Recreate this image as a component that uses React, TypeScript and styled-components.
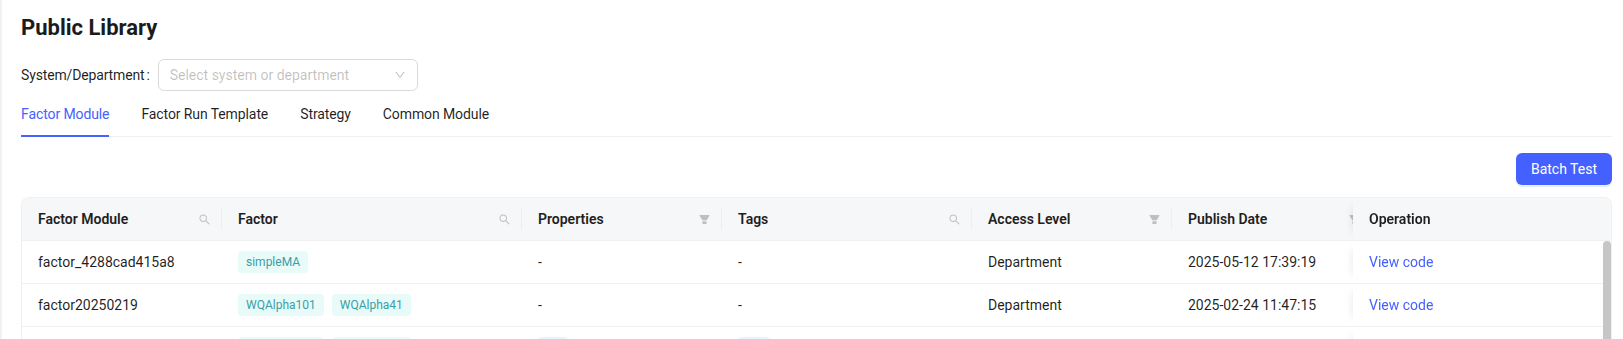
import styled, { createGlobalStyle } from "styled-components";
import { AiOutlineSearch, AiFillFilter, AiOutlineDown } from "react-icons/ai";

const PRIMARY = "#4461ff";

const GlobalStyle = createGlobalStyle`
  html, body {
    margin: 0;
    padding: 0;
    background: #fff;
    overflow: hidden;
  }
  body {
    font-family: Roboto, "Noto Sans", Arial, sans-serif;
    font-size: 14px;
    color: rgba(0, 0, 0, 0.88);
  }
`;

type Filter = "search" | "filter" | null;

const columns: { title: string; width: number; filter: Filter }[] = [
  { title: "Factor Module", width: 200, filter: "search" },
  { title: "Factor", width: 300, filter: "search" },
  { title: "Properties", width: 200, filter: "filter" },
  { title: "Tags", width: 250, filter: "search" },
  { title: "Access Level", width: 200, filter: "filter" },
  { title: "Publish Date", width: 200, filter: "filter" },
];

type Row = {
  module: string;
  factors: string[];
  props: string[];
  tags: string[];
  access: string;
  date: string;
};

const rows: Row[] = [
  {
    module: "factor_4288cad415a8",
    factors: ["simpleMA"],
    props: [],
    tags: [],
    access: "Department",
    date: "2025-05-12 17:39:19",
  },
  {
    module: "factor20250219",
    factors: ["WQAlpha101", "WQAlpha41"],
    props: [],
    tags: [],
    access: "Department",
    date: "2025-02-24 11:47:15",
  },
  {
    module: "factor_alpha_demo",
    factors: ["WQAlpha101", "WQAlpha41"],
    props: ["1d"],
    tags: ["alp"],
    access: "Department",
    date: "2025-02-20 10:12:03",
  },
  {
    module: "factor_momentum",
    factors: ["momentum"],
    props: [],
    tags: [],
    access: "System",
    date: "2025-01-16 09:30:41",
  },
];

const gridCols = columns.map((c) => `${c.width}px`).join(" ");

export default function App() {
  return (
    <Page>
      <GlobalStyle />
      <Title>Public Library</Title>
      <FilterRow>
        <Label>
          System/Department<Colon>:</Colon>
        </Label>
        <SelectBox>
          <Placeholder>Select system or department</Placeholder>
          <AiOutlineDown size={12} color="#bfbfbf" />
        </SelectBox>
      </FilterRow>

      <TabBar>
        <Tab $active>Factor Module</Tab>
        <Tab>Factor Run Template</Tab>
        <Tab>Strategy</Tab>
        <Tab>Common Module</Tab>
      </TabBar>

      <Toolbar>
        <PrimaryButton>Batch Test</PrimaryButton>
      </Toolbar>

      <TableWrap>
        <HeadScroll>
          <HeadRow>
            {columns.map((c) => (
              <HeadCell key={c.title}>
                <HeadText>{c.title}</HeadText>
                {c.filter === "search" ? (
                  <AiOutlineSearch size={13} color="#bfbfbf" />
                ) : (
                  <AiFillFilter size={13} color="#bfbfbf" />
                )}
                <ColDivider />
              </HeadCell>
            ))}
            <OpHeadCell>Operation</OpHeadCell>
          </HeadRow>
        </HeadScroll>
        <BodyFrame>
          <BodyScroll>
            {rows.map((r) => (
              <BodyRow key={r.module}>
                <Cell>{r.module}</Cell>
                <Cell>
                  {r.factors.map((f) => (
                    <Tag key={f} $tone="cyan">
                      {f}
                    </Tag>
                  ))}
                </Cell>
                <Cell>
                  {r.props.length
                    ? r.props.map((p) => (
                        <Tag key={p} $tone="blue">
                          {p}
                        </Tag>
                      ))
                    : "-"}
                </Cell>
                <Cell>
                  {r.tags.length
                    ? r.tags.map((t) => (
                        <Tag key={t} $tone="blue">
                          {t}
                        </Tag>
                      ))
                    : "-"}
                </Cell>
                <Cell>{r.access}</Cell>
                <Cell>{r.date}</Cell>
                <OpCell>
                  <LinkText>View code</LinkText>
                </OpCell>
              </BodyRow>
            ))}
          </BodyScroll>
          <ScrollTrack>
            <ScrollThumb />
          </ScrollTrack>
        </BodyFrame>
      </TableWrap>
    </Page>
  );
}

const Page = styled.div`
  box-sizing: border-box;
  height: 339px;
  border-left: 2px solid #f2f2f2;
  padding: 14px 11px 0 19px;
`;

const Title = styled.h1`
  margin: 0 0 17px;
  font-size: 22px;
  line-height: 28px;
  font-weight: 700;
  color: #1b1b1b;
`;

const FilterRow = styled.div`
  display: flex;
  align-items: center;
  height: 32px;
`;

const Label = styled.label`
  display: flex;
  align-items: center;
  line-height: 22px;
  letter-spacing: -0.15px;
`;

const Colon = styled.span`
  margin: 0 8px 0 2px;
`;

const SelectBox = styled.div`
  box-sizing: border-box;
  width: 260px;
  height: 32px;
  padding: 0 11px;
  border: 1px solid #d9d9d9;
  border-radius: 6px;
  display: flex;
  align-items: center;
  justify-content: space-between;
`;

const Placeholder = styled.span`
  color: rgba(0, 0, 0, 0.25);
`;

const TabBar = styled.div`
  display: flex;
  gap: 32px;
  border-bottom: 1px solid #f0f0f0;
  margin-bottom: 16px;
`;

const Tab = styled.div<{ $active?: boolean }>`
  padding: 12px 0 10px;
  line-height: 22px;
  margin-bottom: -1px;
  letter-spacing: -0.1px;
  border-bottom: 2px solid ${(p) => (p.$active ? PRIMARY : "transparent")};
  color: ${(p) => (p.$active ? PRIMARY : "rgba(0, 0, 0, 0.88)")};
`;

const Toolbar = styled.div`
  display: flex;
  justify-content: flex-end;
  margin-bottom: 12px;
`;

const PrimaryButton = styled.button`
  height: 32px;
  padding: 0 15px;
  border: none;
  border-radius: 6px;
  background: ${PRIMARY};
  color: #fff;
  font-family: inherit;
  font-size: 14px;
  box-shadow: 0 2px 0 rgba(5, 95, 255, 0.1);
`;

const TableWrap = styled.div`
  border: 1px solid #f0f0f0;
  border-bottom: none;
  border-radius: 8px 8px 0 0;
  overflow: hidden;
`;

const HeadScroll = styled.div`
  overflow: hidden;
  background: #f6f7f9;
  border-bottom: 1px solid #f0f0f0;
`;

const HeadRow = styled.div`
  display: grid;
  grid-template-columns: ${gridCols} 258px;
  width: max-content;
`;

const HeadCell = styled.div`
  display: flex;
  align-items: center;
  padding: 10px 0 10px 16px;
  line-height: 22px;
  font-weight: 600;
  color: #1f1f1f;
`;

const HeadText = styled.span`
  flex: 1;
`;

const ColDivider = styled.span`
  width: 1px;
  height: 22px;
  margin-left: 10px;
  background: #eceef0;
`;

const OpHeadCell = styled(HeadCell)`
  position: sticky;
  right: 0;
  background: #f6f7f9;
  box-shadow: -8px 0 8px -8px rgba(5, 5, 5, 0.1);
`;

const BodyFrame = styled.div`
  display: flex;
  height: 172px;
`;

const BodyScroll = styled.div`
  flex: 1;
  min-width: 0;
  overflow: hidden;
`;

const ScrollTrack = styled.div`
  width: 8px;
  flex-shrink: 0;
  background: #fff;
`;

const ScrollThumb = styled.div`
  height: 150px;
  border-radius: 4px 4px 0 0;
  background: #c6c6c6;
`;

const BodyRow = styled.div`
  display: grid;
  grid-template-columns: ${gridCols} 250px;
  width: max-content;
  border-bottom: 1px solid #f0f0f0;
`;

const Cell = styled.div`
  display: flex;
  align-items: center;
  gap: 8px;
  padding: 10px 16px;
  line-height: 22px;
  white-space: nowrap;
  overflow: hidden;
`;

const OpCell = styled(Cell)`
  position: sticky;
  right: 0;
  background: #fff;
  box-shadow: -8px 0 8px -8px rgba(5, 5, 5, 0.1);
`;

const Tag = styled.span<{ $tone: "cyan" | "blue" }>`
  display: inline-block;
  padding: 0 7px;
  font-size: 12px;
  line-height: 20px;
  border: 1px solid transparent;
  border-radius: 4px;
  background: ${(p) => (p.$tone === "cyan" ? "#e8fbf9" : "#e6f4ff")};
  color: ${(p) => (p.$tone === "cyan" ? "#3a9ea6" : "#1677ff")};
`;

const LinkText = styled.a`
  color: ${PRIMARY};
  cursor: pointer;
`;
